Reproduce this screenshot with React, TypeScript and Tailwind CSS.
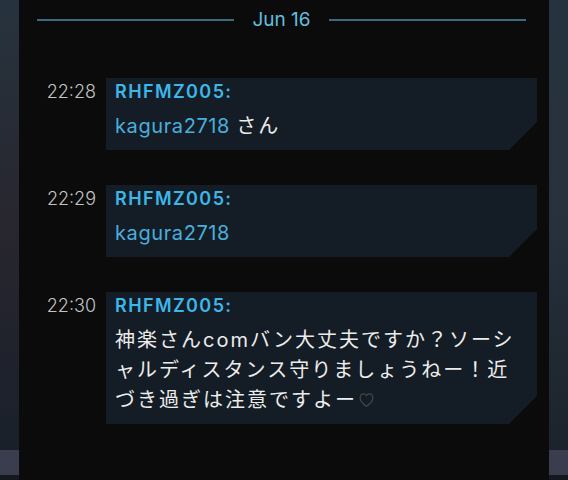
const messages = [
  {
    time: "22:28",
    name: "RHFMZ005:",
    body: (
      <>
        <span className="text-[#4aaedd]">kagura2718</span> <span className="tracking-[2px]">さん</span>
      </>
    ),
  },
  { time: "22:29", name: "RHFMZ005:", body: <span className="text-[#4aaedd]">kagura2718</span> },
  {
    time: "22:30",
    name: "RHFMZ005:",
    body: (
      <span className="tracking-[2px]">
        神楽さんcomバン大丈夫ですか？ソーシ
        <br />
        ャルディスタンス守りましょうねー！近
        <br />
        づき過ぎは注意ですよー
        <svg viewBox="3 4 18 17.5" className="ml-[1px] inline-block h-[14px] w-[17px] align-[0px]" fill="none" stroke="#45484d" strokeWidth="1.5">
          <path d="M12 20.5s-8-5.2-8-10.6C4 6.9 6.2 5 8.4 5c1.6 0 2.9.9 3.6 2.2C12.7 5.9 14 5 15.6 5 17.8 5 20 6.9 20 9.9c0 5.4-8 10.6-8 10.6z" />
        </svg>
      </span>
    ),
  },
];

const Strip = ({ side }: { side: "left" | "right" }) => (
  <div className="flex h-full w-[19px] shrink-0 flex-col">
    <div
      className={
        side === "left"
          ? "flex-1 bg-gradient-to-b from-[#26333e] via-[#28262f] to-[#19202a]"
          : "flex-1 bg-gradient-to-b from-[#26323d] via-[#26313b] to-[#1c232c]"
      }
    />
    <div className="h-[25px] bg-[#393d4d]" />
    <div className="h-[5px] bg-[#15181f]" />
  </div>
);

const App = () => {
  return (
    <div
      className="flex h-[480px] w-[568px] overflow-hidden bg-[#0b0b0b]"
      style={{ fontFamily: 'Inter, "Noto Sans CJK JP", sans-serif' }}
    >
      <Strip side="left" />

      <div className="flex h-full w-[530px] flex-col bg-[#0b0b0b]">
        <div className="mt-[8px] flex items-center pl-[18px] pr-[23px]">
          <div className="h-[2px] flex-1 bg-[#3a6b7e]" />
          <span className="px-[18px] text-[19px] leading-[24px] text-[#62bfe0]">Jun 16</span>
          <div className="h-[2px] flex-1 bg-[#3a6b7e]" />
        </div>

        <div className="mt-[46px] flex flex-col gap-[35px]">
          {messages.map((m) => (
            <div key={m.time} className="flex items-start">
              <span className="w-[77px] pt-[2px] text-right text-[18px] font-light leading-[24px] text-[#c4c4c4]">
                {m.time}
              </span>
              <div
                className="ml-[10px] w-[431px] bg-[#141d25] pb-[9px] pl-[9px] pr-[17px] pt-[2px]"
                style={{
                  clipPath:
                    "polygon(0 0, 100% 0, 100% calc(100% - 28px), calc(100% - 28px) 100%, 0 100%)",
                }}
              >
                <p className="text-[18px] font-semibold leading-[24px] tracking-[1.4px] text-[#3db6ea]">
                  {m.name}
                </p>
                <p className="mt-[7px] text-[20px] leading-[30px] tracking-[0.6px] text-[#ececec]">
                  {m.body}
                </p>
              </div>
            </div>
          ))}
        </div>
      </div>

      <Strip side="right" />
    </div>
  );
};

export default App;
